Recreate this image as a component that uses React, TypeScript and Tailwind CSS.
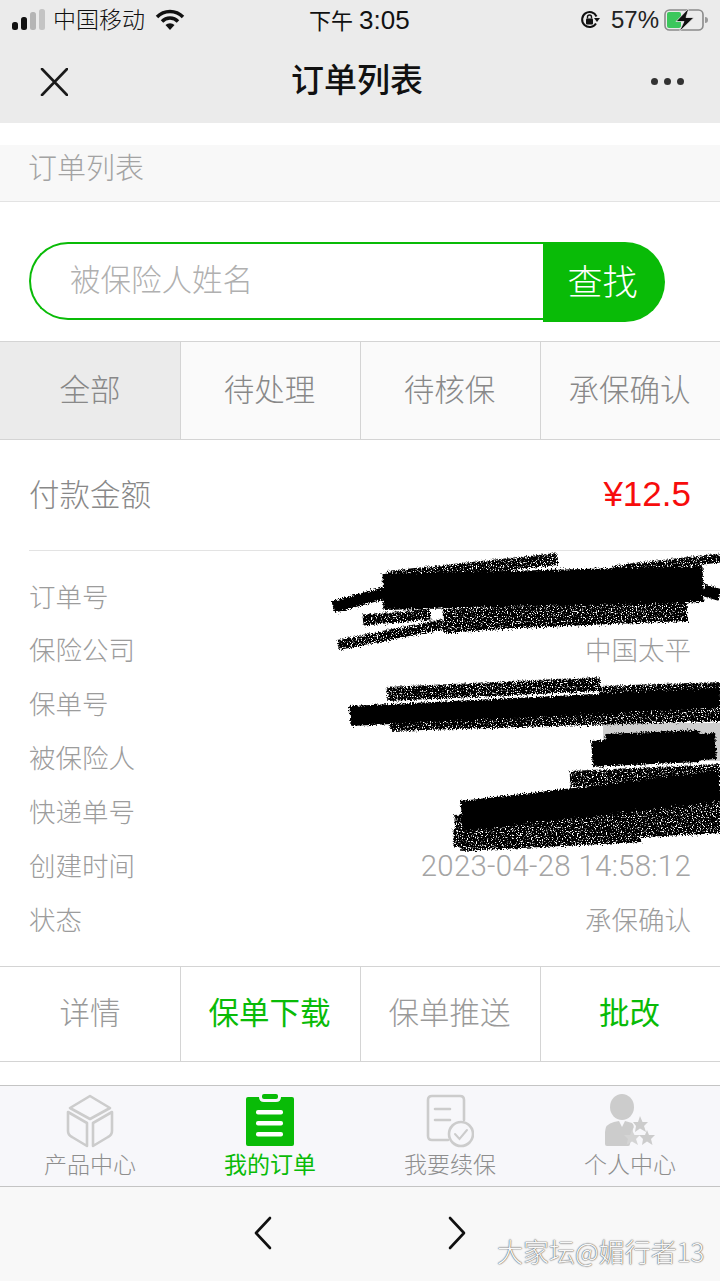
const cjk = { fontFamily: '"Noto Sans CJK SC", "Liberation Sans", sans-serif' };
const latin = { fontFamily: '"Liberation Sans", sans-serif' };

const filterTabs = ['全部', '待处理', '待核保', '承保确认'];

const details = [
    { label: '订单号', value: '' },
    { label: '保险公司', value: '中国太平' },
    { label: '保单号', value: '' },
    { label: '被保险人', value: '' },
    { label: '快递单号', value: '' },
    { label: '创建时间', value: '2023-04-28 14:58:12' },
    { label: '状态', value: '承保确认' },
];

const actions = [
    { label: '详情', green: false },
    { label: '保单下载', green: true },
    { label: '保单推送', green: false },
    { label: '批改', green: true },
];

function StatusBar() {
    return (
        <div className="h-[40px] flex items-center justify-between pl-[12px] pr-[12px] text-[#111]">
            <div className="flex items-center">
                <svg width="33" height="22" viewBox="0 0 33 22">
                    <rect x="0" y="13" width="6" height="8" rx="2.5" fill="#111" />
                    <rect x="9" y="8" width="6" height="13" rx="2.5" fill="#111" />
                    <rect x="18" y="3" width="6" height="18" rx="2.5" fill="#b5b5b5" />
                    <rect x="27" y="0" width="6" height="21" rx="2.5" fill="#c4c4c4" />
                </svg>
                <span className="text-[23px] leading-none ml-[8px] pb-[4px]" style={cjk}>中国移动</span>
                <svg width="30" height="22" viewBox="0 0 30 22" className="ml-[10px]">
                    <path d="M2 8 A18 18 0 0 1 28 8" fill="none" stroke="#111" strokeWidth="3.4" />
                    <path d="M7 12.5 A11 11 0 0 1 23 12.5" fill="none" stroke="#111" strokeWidth="3.4" />
                    <path d="M10.5 16 L15 21 L19.5 16 A6.5 6.5 0 0 0 10.5 16 Z" fill="#111" />
                </svg>
            </div>
            <div className="absolute left-[309px] top-[3px] flex items-center leading-[32px]" style={cjk}>
                <span className="text-[22px] pb-[2px] font-normal">下午</span>
                <span className="ml-[6px] text-[26px]" style={latin}>3:05</span>
            </div>
            <div className="flex items-center">
                <svg width="20" height="20" viewBox="0 0 20 20">
                    <path d="M16 13.5 A7.5 7.5 0 1 1 16.5 6.5" fill="none" stroke="#111" strokeWidth="2" />
                    <path d="M14 8 L20 8 L17 12 Z" fill="#111" />
                    <rect x="6" y="8.5" width="7" height="6" rx="1" fill="#111" />
                    <path d="M7.5 8.5 V7 A2 2 0 0 1 11.5 7 V8.5" fill="none" stroke="#111" strokeWidth="1.4" />
                </svg>
                <span className="text-[24px] leading-none ml-[11px] text-[#222]" style={latin}>57%</span>
                <svg width="44" height="24" viewBox="0 0 44 24" className="ml-[5px]">
                    <rect x="1" y="2" width="38" height="20" rx="4.5" fill="none" stroke="#8a8a8a" strokeWidth="1.6" />
                    <rect x="3" y="4" width="14" height="16" rx="2" fill="#3cc75c" />
                    <path d="M41 9 V15 A3 3 0 0 0 41 9 Z" fill="#999" />
                    <path d="M25 0 L12 13.5 H20 L15 24 L30 9.5 H22 Z" fill="#111" stroke="#ebebeb" strokeWidth="0.8" />
                </svg>
            </div>
        </div>
    );
}

function Scribbles() {
    return (
        <svg width="400" height="320" viewBox="320 540 400 320" className="absolute right-0 top-[-11px]">
            <defs>
                <filter id="rough" x="-5%" y="-30%" width="110%" height="160%">
                    <feTurbulence type="fractalNoise" baseFrequency="0.7" numOctaves="2" seed="4" result="n" />
                    <feDisplacementMap in="SourceGraphic" in2="n" scale="6" result="d" />
                    <feGaussianBlur in="d" stdDeviation="0.5" />
                </filter>
                <filter id="grain" x="-5%" y="-30%" width="110%" height="160%">
                    <feTurbulence type="fractalNoise" baseFrequency="0.8" numOctaves="2" seed="9" result="n" />
                    <feDisplacementMap in="SourceGraphic" in2="n" scale="7" result="d" />
                    <feColorMatrix in="n" type="matrix" values="0 0 0 0 0 0 0 0 0 0 0 0 0 0 0 0 0 0 -7 4.9" result="holes" />
                    <feComposite in="d" in2="holes" operator="in" result="c" />
                    <feGaussianBlur in="c" stdDeviation="0.4" />
                </filter>
            </defs>
            <rect x="603" y="723" width="117" height="38" fill="#cfcfcf" />
            <g stroke="#000" strokeLinecap="butt" fill="none" filter="url(#grain)">
                <path d="M387 577 L557 559" strokeWidth="12" />
                <path d="M613 570 L720 558" strokeWidth="9" />
                <path d="M443 620 L687 610" strokeWidth="22" />
                <path d="M363 620 L430 614" strokeWidth="11" />
                <path d="M338 645 L443 624" strokeWidth="10" />
                <path d="M443 628 L590 618" strokeWidth="10" />
                <path d="M387 694 L600 684" strokeWidth="14" />
                <path d="M600 692 L720 688" strokeWidth="12" />
                <path d="M390 724 L720 714" strokeWidth="14" />
                <path d="M455 826 L720 806" strokeWidth="22" />
                <path d="M453 838 L720 824" strokeWidth="18" />
                <path d="M460 845 L640 836" strokeWidth="12" />
                <path d="M570 779 L720 772" strokeWidth="16" />
            </g>
            <g stroke="#000" strokeLinecap="butt" fill="none" filter="url(#rough)">
                <path d="M383 592 L703 584" strokeWidth="36" />
                <path d="M333 607 L385 593" strokeWidth="12" />
                <path d="M703 590 L720 595" strokeWidth="12" />
                <path d="M350 716 L720 698" strokeWidth="20" />
                <path d="M592 754 L716 746" strokeWidth="26" />
                <path d="M606 750 L700 746" strokeWidth="32" />
                <path d="M462 816 L720 786" strokeWidth="30" />
            </g>
        </svg>
    );
}

function BoxIcon() {
    return (
        <svg width="48" height="54" viewBox="0 0 48 54" fill="none" stroke="#cccccc" strokeWidth="2.6" strokeLinejoin="round">
            <path d="M24 2 L44 14 L24 25 L4 14 Z" />
            <path d="M2 18 L21 29 V52 L6 43 Q2 41 2 37 Z" />
            <path d="M46 18 L27 29 V52 L42 43 Q46 41 46 37 Z" />
        </svg>
    );
}

function ClipboardIcon() {
    return (
        <svg width="50" height="54" viewBox="0 0 50 54">
            <path d="M3 3 H14 Q14 8 19 8 H31 Q36 8 36 3 H47 Q49 3 49 5 V50 Q49 52 47 52 H3 Q1 52 1 50 V5 Q1 3 3 3 Z" fill="#09bb07" />
            <rect x="17" y="0" width="16" height="5" rx="2" fill="#09bb07" />
            <rect x="11" y="16" width="27" height="4.5" rx="2" fill="#fff" />
            <rect x="11" y="27" width="27" height="4.5" rx="2" fill="#fff" />
            <rect x="11" y="38" width="27" height="4.5" rx="2" fill="#fff" />
        </svg>
    );
}

function RenewIcon() {
    return (
        <svg width="48" height="54" viewBox="0 0 48 54" fill="none" stroke="#cccccc" strokeWidth="2.6" strokeLinecap="round">
            <path d="M22 46 H6 Q2 46 2 42 V6 Q2 2 6 2 H34 Q38 2 38 6 V26" />
            <path d="M9 15 H24 M9 26 H24" />
            <circle cx="35" cy="40" r="12" />
            <path d="M29 40 L33.5 45 L41 36" strokeWidth="2" />
        </svg>
    );
}

function PersonIcon() {
    return (
        <svg width="50" height="54" viewBox="0 0 50 54" fill="#cccccc">
            <ellipse cx="17" cy="13" rx="12" ry="13" />
            <path d="M0 50 V38 Q0 30 9 28 L14 27 L17 33 L20 27 L27 29 Q30 32 28 35 L25 50 Q25 52 23 52 H2 Q0 52 0 50 Z" />
            <path d="M35 22 L37.5 28 H43 L39 32 L41 38 L35 34.5 L30 38 L31 32 L28 28 H33 Z" />
            <path d="M27 36 L29.5 41 H35 L31 45 L33 51 L27 47.5 L21.5 51 L23 45 L19 41 H25 Z" fill="#d4d4d4" />
            <path d="M42 36 L44 41 H50 L46 45 L47.5 51 L42 47.5 L37 51 L38 45 L34 41 H40 Z" />
        </svg>
    );
}

const navItems = [
    { label: '产品中心', icon: <BoxIcon />, active: false },
    { label: '我的订单', icon: <ClipboardIcon />, active: true },
    { label: '我要续保', icon: <RenewIcon />, active: false },
    { label: '个人中心', icon: <PersonIcon />, active: false },
];

export default function App() {
    return (
        <div className="relative w-[720px] h-[1281px] overflow-hidden bg-white font-light" style={cjk}>
            <header className="bg-[#ebebeb] h-[123px]">
                <StatusBar />
                <div className="h-[83px] flex items-center justify-between pl-[40px] pr-[36px]">
                    <svg width="28" height="28" viewBox="0 0 28 28" fill="none" stroke="#1a1a1a" strokeWidth="2.6" strokeLinecap="round">
                        <path d="M2 1 L27 27 M27 1 L2 27" />
                    </svg>
                    <h1 className="text-[33px] font-medium leading-none text-[#111] pb-[6px] mr-[5px]">订单列表</h1>
                    <div className="flex gap-[6px]">
                        <span className="w-[7px] h-[7px] rounded-full bg-[#333]"></span>
                        <span className="w-[7px] h-[7px] rounded-full bg-[#333]"></span>
                        <span className="w-[7px] h-[7px] rounded-full bg-[#333]"></span>
                    </div>
                </div>
            </header>

            <div className="mt-[22px] h-[57px] bg-[#f8f8f8] border-b border-[#e3e3e3] pl-[28px] flex items-center">
                <span className="text-[29px] leading-none text-[#a3a3a3] pb-[14px]">订单列表</span>
            </div>

            <div className="h-[139px] pl-[29px] pt-[40px] flex items-start">
                <div className="w-[514px] h-[78px] border-2 border-r-0 border-[#09bb07] rounded-l-full pl-[39px] flex items-center">
                    <span className="text-[30.5px] leading-none text-[#b0b0b0] pb-[6px]">被保险人姓名</span>
                </div>
                <div className="w-[122px] h-[80px] bg-[#09bb07] rounded-r-full flex items-center justify-center pr-[3px]">
                    <span className="text-[35px] leading-none text-white pb-[6px]">查找</span>
                </div>
            </div>

            <div className="h-[99px] grid grid-cols-4 border-y border-[#d4d4d4]">
                {filterTabs.map((tab, i) => (
                    <div
                        key={tab}
                        className={`flex items-center justify-center text-[30.5px] text-[#888] pb-[3px] ${i === 0 ? 'bg-[#ebebeb]' : 'bg-[#fafafa] border-l border-[#d4d4d4] pr-[2px]'}`}
                    >
                        {tab}
                    </div>
                ))}
            </div>

            <div className="h-[111px] ml-[29px] pr-[29px] border-b border-[#e3e3e3] flex items-center justify-between">
                <span className="text-[30.5px] text-[#888] pb-[3px]">付款金额</span>
                <span className="text-[35px] text-[#f70c0c] pb-[2px]" style={latin}>¥12.5</span>
            </div>

            <div className="relative h-[416px] border-b border-[#d4d4d4] px-[29px] pt-[18px]">
                {details.map((row) => (
                    <div key={row.label} className="h-[53.9px] flex items-center justify-between text-[26.5px] text-[#9c9c9c]">
                        <span className="pb-[1px]">{row.label}</span>
                        {row.value.startsWith('2023') ? (
                            <span className="text-[29.4px] text-[#a4a4a4] tracking-[0.3px] pt-[2px]" style={{ fontFamily: 'Roboto, sans-serif' }}>{row.value}</span>
                        ) : (
                            <span className="pb-[1px]">{row.value}</span>
                        )}
                    </div>
                ))}
                <Scribbles />
            </div>

            <div className="h-[95px] grid grid-cols-4 border-b border-[#d4d4d4]">
                {actions.map((action, i) => (
                    <div
                        key={action.label}
                        className={`flex items-center justify-center text-[30.5px] pb-[4px] ${action.green ? 'text-[#09bb07] font-normal' : 'text-[#999]'} ${i > 0 ? 'border-l border-[#d4d4d4] pr-[2px]' : ''}`}
                    >
                        {action.label}
                    </div>
                ))}
            </div>

            <nav className="mt-[23px] h-[102px] bg-[#f7f7fa] border-y border-[#c4c4c4] grid grid-cols-4">
                {navItems.map((item) => (
                    <div key={item.label} className="flex flex-col items-center pt-[8px]">
                        <div className="h-[52px]">{item.icon}</div>
                        <span className={`text-[23px] leading-[34px] ${item.active ? 'text-[#09bb07] font-normal' : 'text-[#8e8e8e]'}`}>{item.label}</span>
                    </div>
                ))}
            </nav>

            <div className="h-[95px] bg-[#f8f8f8] flex items-start justify-center gap-[174px] pt-[29px]">
                <svg width="20" height="34" viewBox="0 0 20 34" fill="none" stroke="#111" strokeWidth="2.6" strokeLinecap="round" strokeLinejoin="round">
                    <path d="M17 2 L3 17 L17 32" />
                </svg>
                <svg width="20" height="34" viewBox="0 0 20 34" fill="none" stroke="#111" strokeWidth="2.6" strokeLinecap="round" strokeLinejoin="round">
                    <path d="M3 2 L17 17 L3 32" />
                </svg>
            </div>

            <span
                className="absolute left-[497px] top-[1234px] text-[26px] leading-[34px] text-[#f8f8f8] whitespace-nowrap"
                style={{ textShadow: '0 0 1.5px #555, 0 0 1px #555' }}
            >
                大家坛@媚行者13
            </span>
        </div>
    );
}
